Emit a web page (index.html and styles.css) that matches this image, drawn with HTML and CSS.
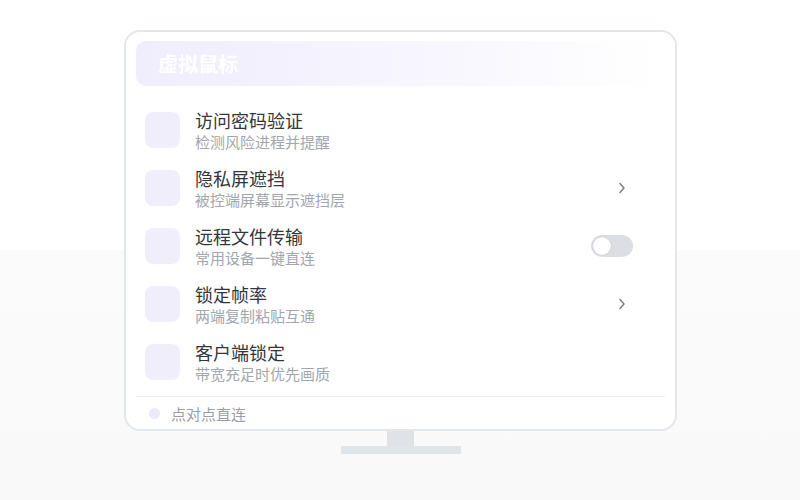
FILE: index.html
```html
<!DOCTYPE html>
<html lang="zh-CN">
<head>
    <meta charset="UTF-8">
    <meta name="viewport" content="width=device-width, initial-scale=1.0">
    <title>虚拟鼠标</title>
    <link rel="stylesheet" href="styles.css">
</head>
<body>
    <div id="stage">
        <div id="monitor">
            <div class="banner">
                <h1>虚拟鼠标</h1>
            </div>
            <div class="list">
                <div class="row">
                    <div class="icon"></div>
                    <div class="text">
                        <div class="title">访问密码验证</div>
                        <div class="sub">检测风险进程并提醒</div>
                    </div>
                </div>
                <div class="row">
                    <div class="icon"></div>
                    <div class="text">
                        <div class="title">隐私屏遮挡</div>
                        <div class="sub">被控端屏幕显示遮挡层</div>
                    </div>
                    <svg class="chevron" width="8" height="12" viewBox="0 0 8 12"><path d="M2 1.5 L6 6 L2 10.5" fill="none" stroke="#7b7f87" stroke-width="1.5" stroke-linecap="round" stroke-linejoin="round"/></svg>
                </div>
                <div class="row">
                    <div class="icon"></div>
                    <div class="text">
                        <div class="title">远程文件传输</div>
                        <div class="sub">常用设备一键直连</div>
                    </div>
                    <div class="toggle"><span class="knob"></span></div>
                </div>
                <div class="row">
                    <div class="icon"></div>
                    <div class="text">
                        <div class="title">锁定帧率</div>
                        <div class="sub">两端复制粘贴互通</div>
                    </div>
                    <svg class="chevron" width="8" height="12" viewBox="0 0 8 12"><path d="M2 1.5 L6 6 L2 10.5" fill="none" stroke="#7b7f87" stroke-width="1.5" stroke-linecap="round" stroke-linejoin="round"/></svg>
                </div>
                <div class="row">
                    <div class="icon"></div>
                    <div class="text">
                        <div class="title">客户端锁定</div>
                        <div class="sub">带宽充足时优先画质</div>
                    </div>
                </div>
            </div>
            <div class="footer">
                <span class="dot"></span>
                <span>点对点直连</span>
            </div>
        </div>
        <div class="neck"></div>
        <div class="base"></div>
    </div>
</body>
</html>
```

FILE: styles.css
```css
body {
    margin: 0;
    min-height: 500px;
    background: linear-gradient(180deg, #ffffff 0, #ffffff 250px, #fbfbfc 250px, #f9f9fa 100%);
    font-family: "Noto Sans CJK SC", "Noto Sans", sans-serif;
}
#stage {
    display: flex;
    flex-direction: column;
    align-items: center;
    padding-top: 30px;
    padding-left: 1px;
}
#monitor {
    width: 529px;
    border: 2px solid #e3e6ea;
    border-radius: 16px;
    padding: 9px 10px 0 10px;
    box-sizing: content-box;
    background-color: #fff;
}
#monitor > * {
    box-sizing: border-box;
}
.banner {
    height: 45px;
    border-radius: 10px;
    background: linear-gradient(90deg, #f0edfd 0%, #f6f4fe 45%, #ffffff 100%);
    display: flex;
    align-items: center;
    padding-left: 22px;
}
.banner h1 {
    margin: 0;
    font-size: 20px;
    font-weight: 700;
    color: #ffffff;
    line-height: 1;
}
.list {
    margin-top: 15px;
    margin-bottom: 5px;
}
.row {
    height: 58px;
    display: flex;
    align-items: center;
    padding: 0 32px 0 9px;
}
.icon {
    width: 35px;
    height: 36px;
    border-radius: 8px;
    background-color: #f1eefc;
    flex-shrink: 0;
}
.text {
    flex: 1;
    margin-left: 15px;
}
.title {
    font-size: 18px;
    line-height: 23px;
    color: #33363b;
}
.sub {
    font-size: 15px;
    line-height: 20px;
    color: #a2a6ad;
}
.chevron {
    margin-right: 7px;
}
.toggle {
    width: 42px;
    height: 22px;
    border-radius: 11px;
    background-color: #dcdee3;
    display: flex;
    align-items: center;
    padding-left: 2px;
    box-sizing: border-box;
}
.knob {
    width: 18px;
    height: 18px;
    border-radius: 50%;
    background-color: #fff;
    box-shadow: 0 0 1px rgba(0, 0, 0, 0.25);
}
.footer {
    border-top: 1px solid #eeeff2;
    height: 33px;
    display: flex;
    align-items: center;
    padding-left: 13px;
    font-size: 15px;
    color: #9a9ea5;
}
.dot {
    width: 11px;
    height: 11px;
    border-radius: 50%;
    background-color: #ece9fb;
    margin-right: 11px;
}
.neck {
    width: 27px;
    height: 15px;
    background-color: #dfe2e6;
}
.base {
    width: 120px;
    height: 8px;
    background-color: #e1e4e8;
}
```
